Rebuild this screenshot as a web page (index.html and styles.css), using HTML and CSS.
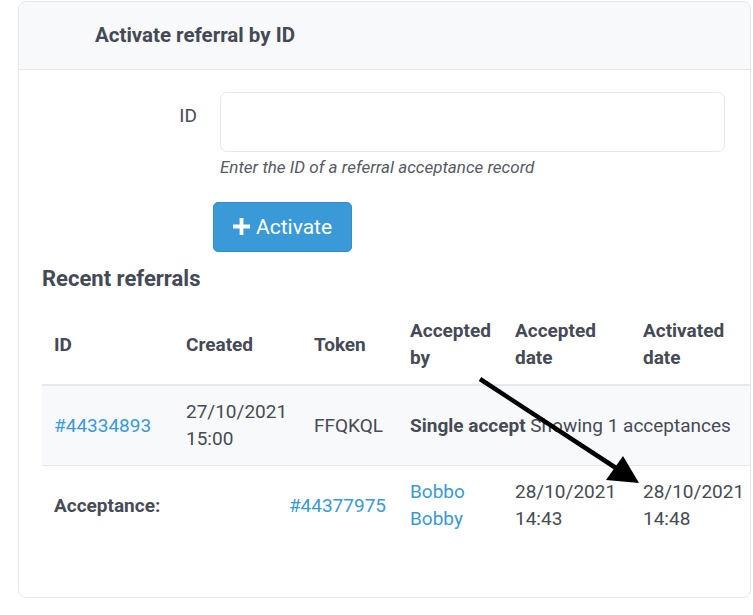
FILE: index.html
```html
<!DOCTYPE html>
<html>
<head>
<meta charset="utf-8">
<link rel="stylesheet" href="styles.css">
</head>
<body>
<div class="card">
  <div class="card-header">Activate referral by ID</div>
  <div class="card-body">
    <div class="form-row">
      <label class="form-label">ID</label>
      <div class="form-field">
        <div class="input"></div>
        <div class="help">Enter the ID of a referral acceptance record</div>
      </div>
    </div>
    <div class="btn-row">
      <button class="btn"><svg class="plus" width="17" height="17" viewBox="0 0 17 17"><path d="M6.6 0h3.8v6.6H17v3.8h-6.6V17H6.6v-6.6H0V6.6h6.6z" fill="#fff"/></svg>Activate</button>
    </div>
    <h2 class="section-title">Recent referrals</h2>
    <table class="tbl">
      <colgroup>
        <col class="c1"><col class="c2"><col class="c3"><col class="c4"><col class="c5"><col class="c6">
      </colgroup>
      <thead>
        <tr><th>ID</th><th>Created</th><th>Token</th><th>Accepted by</th><th>Accepted date</th><th>Activated date</th></tr>
      </thead>
      <tbody>
        <tr class="main">
          <td><a class="link">#44334893</a></td>
          <td>27/10/2021 15:00</td>
          <td>FFQKQL</td>
          <td colspan="3" class="nowrap"><strong>Single accept</strong> Showing 1 acceptances</td>
        </tr>
        <tr class="sub">
          <td><strong>Acceptance:</strong></td>
          <td colspan="2" class="right"><a class="link">#44377975</a></td>
          <td><a class="link">Bobbo Bobby</a></td>
          <td>28/10/2021 14:43</td>
          <td>28/10/2021 14:48</td>
        </tr>
      </tbody>
    </table>
  </div>
  <svg class="arrow" width="753" height="615" viewBox="0 0 753 615">
    <line x1="480" y1="379" x2="616" y2="468" stroke="#000" stroke-width="4.5"/>
    <polygon points="606,480 623,456 639,483" fill="#000"/>
  </svg>
</div>
</body>
</html>
```
FILE: styles.css
```css
* { box-sizing: border-box; }
body {
  margin: 0;
  font-family: Roboto, "Noto Sans", sans-serif;
  color: #464b55;
  background: #fff;
}
.card {
  position: relative;
  margin: 1px 0 0 18px;
  width: 733px;
  height: 597px;
  border: 1px solid #e4e7ef;
  border-radius: 8px;
  overflow: hidden;
}
.card-header {
  height: 68px;
  background: #f8f9fb;
  border-bottom: 1px solid #e4e7ef;
  padding: 20px 0 0 76px;
  font-size: 20.5px;
  font-weight: 700;
  line-height: 26px;
  color: #444a55;
}
.card-body {
  padding: 22px 0 0 23px;
}
.form-row {
  display: flex;
  gap: 23px;
}
.form-label {
  width: 155px;
  text-align: right;
  font-size: 19px;
  line-height: 27px;
  padding-top: 10px;
}
.form-field { width: 505px; }
.input {
  height: 60px;
  border: 1px solid #e4e7ef;
  border-radius: 7px;
  background: #fff;
}
.help {
  margin-top: 3px;
  font-size: 17px;
  font-style: italic;
  line-height: 24px;
  color: #555a63;
}
.btn-row { margin: 23px 0 0 171px; }
.btn {
  display: flex;
  align-items: center;
  gap: 6px;
  height: 50px;
  width: 139px;
  padding: 0 0 1px 19px;
  background: #3a99d7;
  border: 1px solid #2f8ecd;
  border-radius: 5px;
  color: #fff;
  font-family: Roboto, sans-serif;
  font-size: 21px;
}
.section-title {
  margin: 13px 0 0;
  font-size: 22px;
  line-height: 28px;
  font-weight: 700;
  color: #444a55;
}
.tbl {
  margin-top: 12px;
  border-collapse: collapse;
  table-layout: fixed;
  width: 723px;
  font-size: 19px;
  line-height: 27px;
}
.c1 { width: 132px; }
.c2 { width: 128px; }
.c3 { width: 96px; }
.c4 { width: 105px; }
.c5 { width: 128px; }
.c6 { width: 134px; }
.tbl th, .tbl td {
  padding: 12px;
  vertical-align: middle;
  text-align: left;
}
.tbl th {
  padding-bottom: 13px;
  font-weight: 700;
  color: #454a54;
  border-bottom: 2px solid #e4e8f1;
}
.tbl tr.main td {
  padding-bottom: 13px;
  background: #f8f9fb;
  border-bottom: 1px solid #e4e7ef;
}
.tbl strong { font-weight: 700; }
.nowrap { white-space: nowrap; }
.right { text-align: right !important; }
.link { color: #3a99d8; }
.arrow {
  position: absolute;
  left: -19px;
  top: -2px;
  pointer-events: none;
}
```
